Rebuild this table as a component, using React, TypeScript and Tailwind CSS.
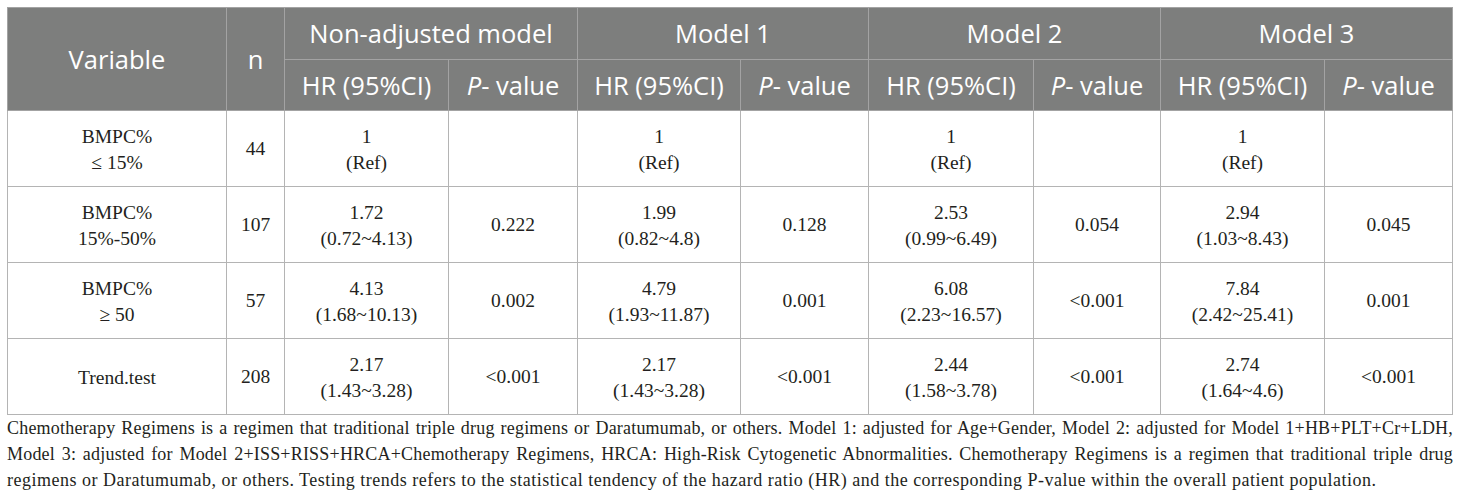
import React from "react";

const widths = [219, 58, 164, 129, 163, 128, 165, 127, 164, 128];

type Row = { v: [string, string | null]; n: string; cells: ([string, string | null] | null)[]; p: string[] };

const rows: Row[] = [
  {
    v: ["BMPC%", "≤ 15%"],
    n: "44",
    cells: [["1", "(Ref)"], ["1", "(Ref)"], ["1", "(Ref)"], ["1", "(Ref)"]],
    p: ["", "", "", ""],
  },
  {
    v: ["BMPC%", "15%-50%"],
    n: "107",
    cells: [
      ["1.72", "(0.72~4.13)"],
      ["1.99", "(0.82~4.8)"],
      ["2.53", "(0.99~6.49)"],
      ["2.94", "(1.03~8.43)"],
    ],
    p: ["0.222", "0.128", "0.054", "0.045"],
  },
  {
    v: ["BMPC%", "≥ 50"],
    n: "57",
    cells: [
      ["4.13", "(1.68~10.13)"],
      ["4.79", "(1.93~11.87)"],
      ["6.08", "(2.23~16.57)"],
      ["7.84", "(2.42~25.41)"],
    ],
    p: ["0.002", "0.001", "<0.001", "0.001"],
  },
  {
    v: ["Trend.test", null],
    n: "208",
    cells: [
      ["2.17", "(1.43~3.28)"],
      ["2.17", "(1.43~3.28)"],
      ["2.44", "(1.58~3.78)"],
      ["2.74", "(1.64~4.6)"],
    ],
    p: ["<0.001", "<0.001", "<0.001", "<0.001"],
  },
];

const hd = "border border-[#a3a3a3] text-center font-normal text-white";
const bd = "border border-[#b4b4b4] text-center align-middle";

function Two({ a, b }: { a: string; b: string | null }) {
  return (
    <div className="leading-[26px] pt-[3px]">
      <div>{a}</div>
      {b !== null && <div>{b}</div>}
    </div>
  );
}

export default function App() {
  return (
    <div className="w-[1460px] h-[501px] bg-white p-[7px] overflow-hidden">
      <table
        className="table-fixed border-collapse w-[1446px]"
        style={{ fontFamily: "'Liberation Serif', serif" }}
      >
        <colgroup>
          {widths.map((w, i) => (
            <col key={i} style={{ width: w }} />
          ))}
        </colgroup>
        <thead
          className="bg-[#7d7e7d] text-[25.5px]"
          style={{ fontFamily: "'Open Sans', sans-serif" }}
        >
          <tr className="h-[52px]">
            <th rowSpan={2} className={hd}>
              Variable
            </th>
            <th rowSpan={2} className={hd}>
              n
            </th>
            <th colSpan={2} className={hd}>
              Non-adjusted model
            </th>
            <th colSpan={2} className={hd}>
              Model 1
            </th>
            <th colSpan={2} className={hd}>
              Model 2
            </th>
            <th colSpan={2} className={hd}>
              Model 3
            </th>
          </tr>
          <tr className="h-[51px]">
            {[0, 1, 2, 3].map((i) => (
              <React.Fragment key={i}>
                <th className={hd}>HR (95%CI)</th>
                <th className={hd}>
                  <i>P</i>- value
                </th>
              </React.Fragment>
            ))}
          </tr>
        </thead>
        <tbody className="text-[19.5px] text-[#231f20]">
          {rows.map((r, ri) => (
            <tr key={ri} className="h-[76px]">
              <td className={bd}>
                <Two a={r.v[0]} b={r.v[1]} />
              </td>
              <td className={bd}>{r.n}</td>
              {r.cells.map((c, ci) => (
                <React.Fragment key={ci}>
                  <td className={bd}>{c && <Two a={c[0]} b={c[1]} />}</td>
                  <td className={bd}>{r.p[ci]}</td>
                </React.Fragment>
              ))}
            </tr>
          ))}
        </tbody>
      </table>
      <div
        className="w-[1446px] text-[18px] leading-[26px] text-[#231f20]"
        style={{ fontFamily: "'Liberation Serif', serif" }}
      >
        <div className="whitespace-nowrap tracking-[0.2px] text-justify [text-align-last:justify]">
          Chemotherapy Regimens is a regimen that traditional triple drug regimens or Daratumumab, or others. Model 1: adjusted for Age+Gender, Model 2: adjusted for Model 1+HB+PLT+Cr+LDH,
        </div>
        <div className="whitespace-nowrap tracking-[0.2px] text-justify [text-align-last:justify]">
          Model 3: adjusted for Model 2+ISS+RISS+HRCA+Chemotherapy Regimens, HRCA: High-Risk Cytogenetic Abnormalities. Chemotherapy Regimens is a regimen that traditional triple drug
        </div>
        <div className="whitespace-nowrap tracking-[0.5px]">
          regimens or Daratumumab, or others. Testing trends refers to the statistical tendency of the hazard ratio (HR) and the corresponding P-value within the overall patient population.
        </div>
      </div>
    </div>
  );
}
